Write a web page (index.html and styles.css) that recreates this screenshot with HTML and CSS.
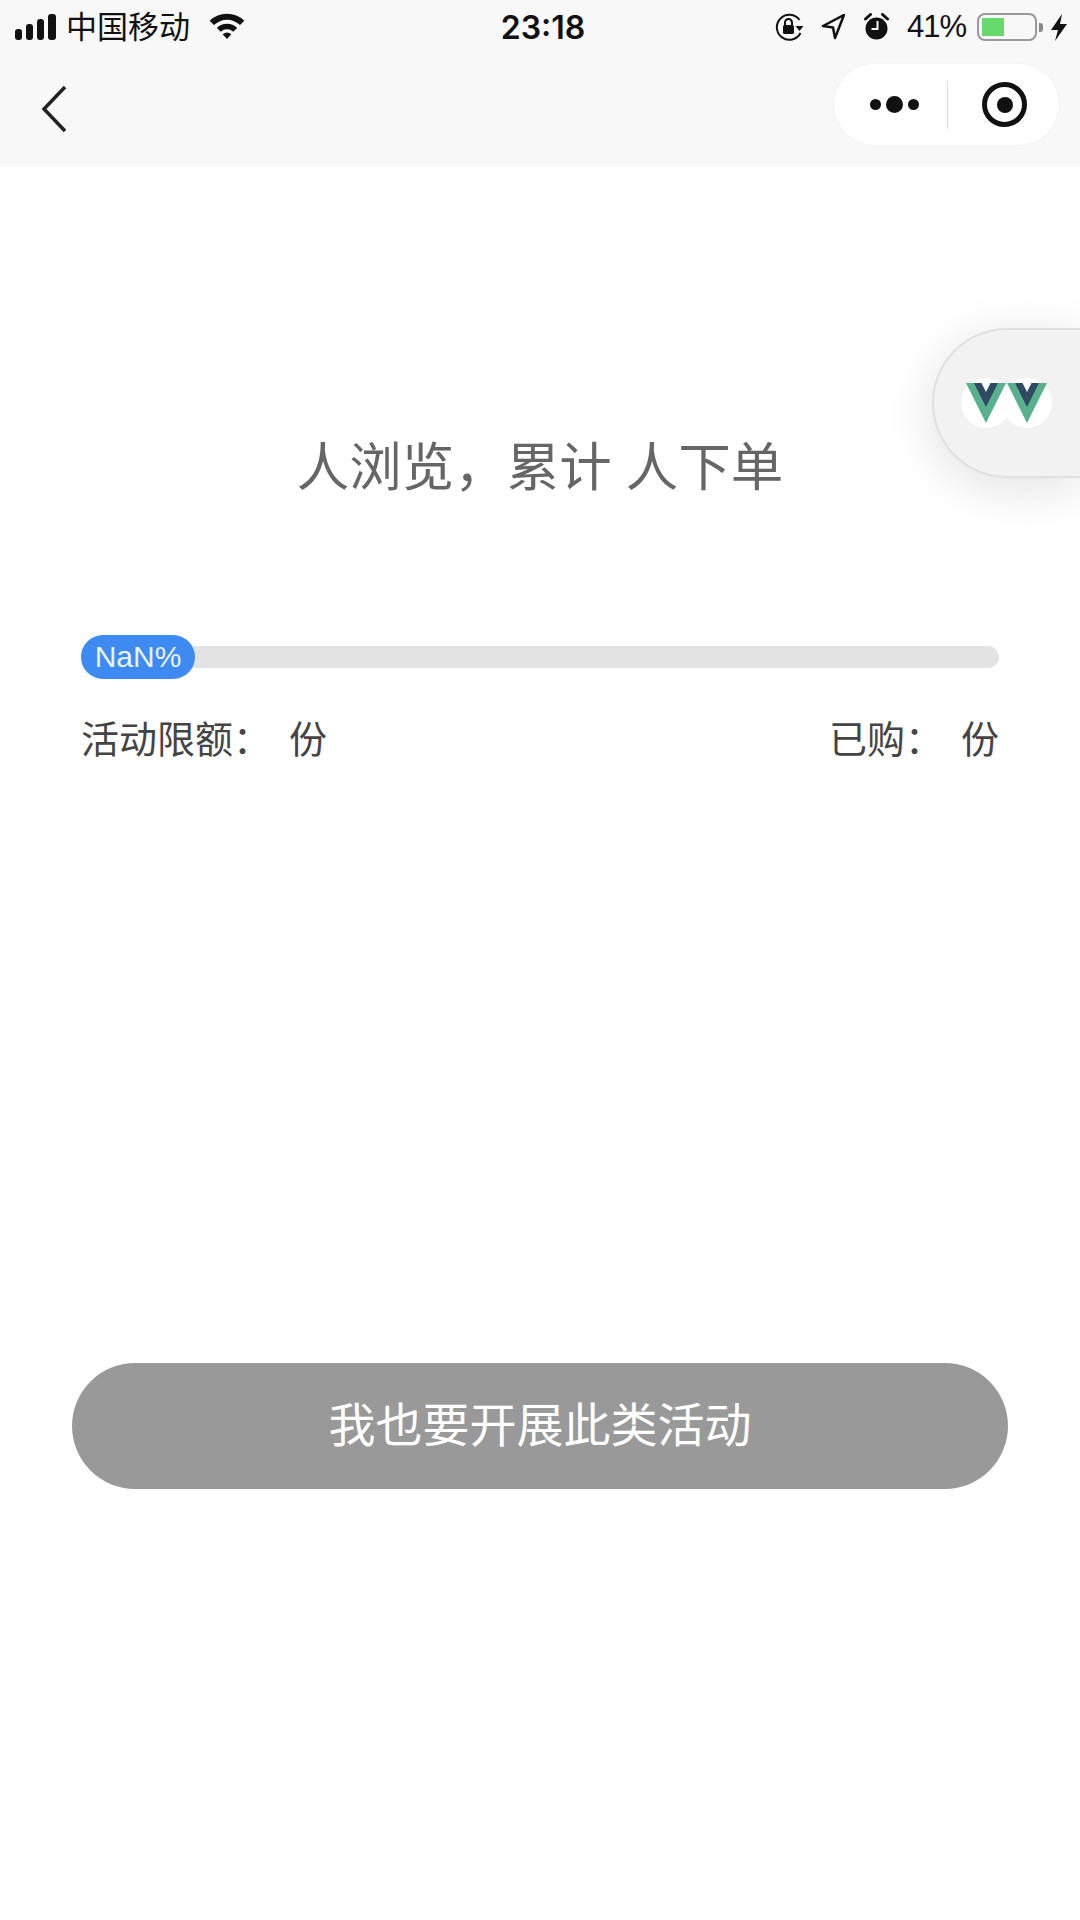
FILE: index.html
```html
<!DOCTYPE html>
<html lang="zh-CN">

<head>
    <meta charset="UTF-8">
    <meta name="viewport" content="width=device-width, initial-scale=1.0">
    <title>活动详情</title>
    <link rel="stylesheet" href="styles.css">
</head>

<body>
    <div class="top-area">
        <div class="status-bar">
            <div class="status-left">
                <svg class="signal" width="42" height="26" viewBox="0 0 42 26">
                    <rect x="0" y="15" width="7" height="11" rx="3"/>
                    <rect x="11" y="10" width="7" height="16" rx="3"/>
                    <rect x="22" y="5" width="7" height="21" rx="3"/>
                    <rect x="33" y="0" width="8" height="26" rx="3"/>
                </svg>
                <span class="carrier">中国移动</span>
                <svg class="wifi" width="36" height="27" viewBox="0 0 36 28">
                    <path d="M0 9 A26 26 0 0 1 36 9 L31.500 13.500 A19.500 19.500 0 0 0 4.500 13.500 Z"/>
                    <path d="M7.500 16.500 A15 15 0 0 1 28.500 16.500 L24.500 20.500 A9.500 9.500 0 0 0 11.500 20.500 Z"/>
                    <path d="M13.500 23 A6.500 6.500 0 0 1 22.500 23 L18 28 Z"/>
                </svg>
            </div>
            <div class="status-time">23:18</div>
            <div class="status-right">
                <svg class="rotation-lock" width="31" height="28" viewBox="0 0 30 28">
                    <path d="M25 7 A12.500 12.500 0 1 0 26 20" fill="none" stroke="#111" stroke-width="2"/>
                    <path d="M21 13 L29 13 L25 18 Z" fill="#111"/>
                    <rect x="8.500" y="12" width="11" height="9" rx="1.500" fill="#111"/>
                    <path d="M10.500 12 V9.500 A3.500 3.500 0 0 1 17.500 9.500 V12" fill="none" stroke="#111" stroke-width="2"/>
                </svg>
                <svg class="location" width="24" height="26" viewBox="0 0 24 26">
                    <path d="M23 1 L2 12 L12 13.500 L14 24 Z" fill="none" stroke="#111" stroke-width="2.500" stroke-linejoin="round"/>
                </svg>
                <svg class="alarm" width="25" height="28" viewBox="0 0 24 28">
                    <circle cx="12" cy="15.500" r="11" fill="#111"/>
                    <path d="M1 6 L6 1.500 M23 6 L18 1.500" stroke="#111" stroke-width="3" stroke-linecap="round"/>
                    <path d="M13 8 V16 H7" fill="none" stroke="#f8f8f8" stroke-width="2"/>
                </svg>
                <span class="battery-percent">41%</span>
                <div class="battery">
                    <div class="battery-fill"></div>
                </div>
                <div class="battery-nub"></div>
                <svg class="bolt" width="16" height="27" viewBox="0 0 16 27">
                    <path d="M11 0 L0 16 H7 L4 27 L16 10 H9 Z" fill="#111"/>
                </svg>
            </div>
        </div>
        <div class="nav-bar">
            <svg class="back" width="26" height="48" viewBox="0 0 26 48">
                <path d="M24 2 L3 24 L24 46" fill="none" stroke="#222" stroke-width="3.500"/>
            </svg>
            <div class="capsule">
                <div class="capsule-dots">
                    <span class="dot"></span>
                    <span class="dot dot-big"></span>
                    <span class="dot"></span>
                </div>
                <div class="capsule-line"></div>
                <div class="capsule-target">
                    <span class="target-center"></span>
                </div>
            </div>
        </div>
    </div>

    <div class="content">
        <h1 class="summary">人浏览，累计<span class="gap"></span>人下单</h1>

        <div class="progress">
            <div class="progress-pill">NaN%</div>
        </div>

        <div class="quota">
            <div class="quota-item">活动限额：<span class="unit">份</span></div>
            <div class="quota-item">已购：<span class="unit">份</span></div>
        </div>

        <button class="join-btn">我也要开展此类活动</button>
    </div>

    <div class="float-panel">
        <div class="avatar">
            <svg width="40" height="40" viewBox="0 0 261.76 226.69" preserveAspectRatio="none">
                <path d="M161.096.001l-30.225 52.351L100.647.001H-.005l130.876 226.688L261.749.001z" fill="#58b08c"/>
                <path d="M161.096.001l-30.225 52.351L100.647.001H52.346l78.526 136.01L209.398.001z" fill="#2f4a62"/>
            </svg>
        </div>
        <div class="avatar avatar-next">
            <svg width="40" height="40" viewBox="0 0 261.76 226.69" preserveAspectRatio="none">
                <path d="M161.096.001l-30.225 52.351L100.647.001H-.005l130.876 226.688L261.749.001z" fill="#58b08c"/>
                <path d="M161.096.001l-30.225 52.351L100.647.001H52.346l78.526 136.01L209.398.001z" fill="#2f4a62"/>
            </svg>
        </div>
    </div>
</body>

</html>
```

FILE: styles.css
```css
body {
    margin: 0;
    height: 1920px;
    overflow: hidden;
    position: relative;
    background-color: #fff;
    font-family: "Noto Sans CJK SC", "Liberation Sans", sans-serif;
}

.top-area {
    height: 167px;
    background-color: #f8f8f8;
}

.status-bar {
    height: 54px;
    padding: 0 13px 0 15px;
    display: grid;
    grid-template-columns: 1fr auto 1fr;
    align-items: center;
    color: #111;
}

.status-left,
.status-right {
    display: flex;
    align-items: center;
}

.status-right {
    justify-content: flex-end;
}

.signal {
    fill: #111;
}

.carrier {
    margin: 0 0 4px 9px;
    font-size: 31px;
    line-height: 40px;
}

.wifi {
    margin: 0 0 3px 19px;
    fill: #111;
}

.status-time {
    margin-left: 4px;
    font-family: Inter, "Liberation Sans", sans-serif;
    font-size: 32px;
    font-weight: 600;
}

.location {
    margin-left: 16px;
}

.alarm {
    margin-left: 19px;
}

.battery-percent {
    margin-left: 18px;
    font-family: "Liberation Sans", sans-serif;
    font-size: 31px;
    letter-spacing: -1px;
}

.battery {
    margin-left: 11px;
    width: 60px;
    height: 28px;
    box-sizing: border-box;
    padding: 3px;
    border: 2px solid #999;
    border-radius: 8px;
}

.battery-fill {
    width: 22px;
    height: 100%;
    background-color: #66d96b;
}

.battery-nub {
    margin-left: 2px;
    width: 4px;
    height: 9px;
    border-radius: 0 3px 3px 0;
    background-color: #888;
}

.bolt {
    margin-left: 8px;
}

.nav-bar {
    height: 113px;
    padding: 0 21px 0 41px;
    display: flex;
    justify-content: space-between;
    align-items: flex-start;
}

.back {
    margin-top: 31px;
}

.capsule {
    margin-top: 10px;
    width: 225px;
    height: 81px;
    display: flex;
    align-items: center;
    background-color: #fff;
    border-radius: 41px;
    box-shadow: 0 0 0 1px #f3f3f3;
}

.capsule-dots {
    width: 106px;
    padding-left: 7px;
    display: flex;
    justify-content: center;
    align-items: center;
    gap: 5px;
}

.dot {
    width: 11px;
    height: 11px;
    border-radius: 50%;
    background-color: #111;
}

.dot-big {
    width: 17px;
    height: 17px;
}

.capsule-line {
    width: 1px;
    height: 48px;
    background-color: #ddd;
}

.capsule-target {
    margin-left: 34px;
    width: 45px;
    height: 45px;
    box-sizing: border-box;
    display: flex;
    justify-content: center;
    align-items: center;
    border: 5px solid #111;
    border-radius: 50%;
}

.target-center {
    width: 16px;
    height: 16px;
    border-radius: 50%;
    background-color: #111;
}

.content {
    display: flex;
    flex-direction: column;
}

.summary {
    margin: 266px 0 0;
    text-align: center;
    font-size: 52.5px;
    font-weight: 400;
    line-height: 60px;
    color: #666;
}

.gap {
    display: inline-block;
    width: 14px;
}

.progress {
    margin: 153px 81px 0;
    height: 22px;
    display: flex;
    align-items: center;
    background-color: #e3e3e3;
    border-radius: 11px;
}

/* pill is twice the track height and sticks out both ways */
.progress-pill {
    width: 114px;
    height: 44px;
    margin: -11px 0;
    text-align: center;
    font-family: "Liberation Sans", sans-serif;
    font-size: 30px;
    line-height: 44px;
    color: #eaf3ff;
    background-color: #3d8bf2;
    border-radius: 22px;
}

.quota {
    margin: 44px 81px 0;
    display: flex;
    justify-content: space-between;
    font-size: 38px;
    line-height: 50px;
    color: #444;
}

.unit {
    margin-left: 18px;
}

.join-btn {
    margin: 601px 72px 0;
    height: 126px;
    padding: 0 0 10px;
    border: none;
    font-family: inherit;
    font-size: 47px;
    color: #fff;
    background-color: #999;
    border-radius: 63px;
}

/* floating panel sits flush with the right edge */
.float-panel {
    position: absolute;
    top: 328px;
    right: 0;
    width: 148px;
    height: 150px;
    box-sizing: border-box;
    padding-left: 27px;
    display: flex;
    align-items: center;
    background-color: #f2f2f2;
    border: 2px solid #e0e0e0;
    border-right: none;
    border-radius: 75px 0 0 75px;
    box-shadow: 0 10px 50px rgba(0, 0, 0, 0.12);
}

.avatar {
    width: 50px;
    height: 50px;
    flex-shrink: 0;
    display: flex;
    justify-content: center;
    align-items: center;
    background-color: #fff;
    border-radius: 50%;
}

.avatar-next {
    margin-left: -9px;
}
```
